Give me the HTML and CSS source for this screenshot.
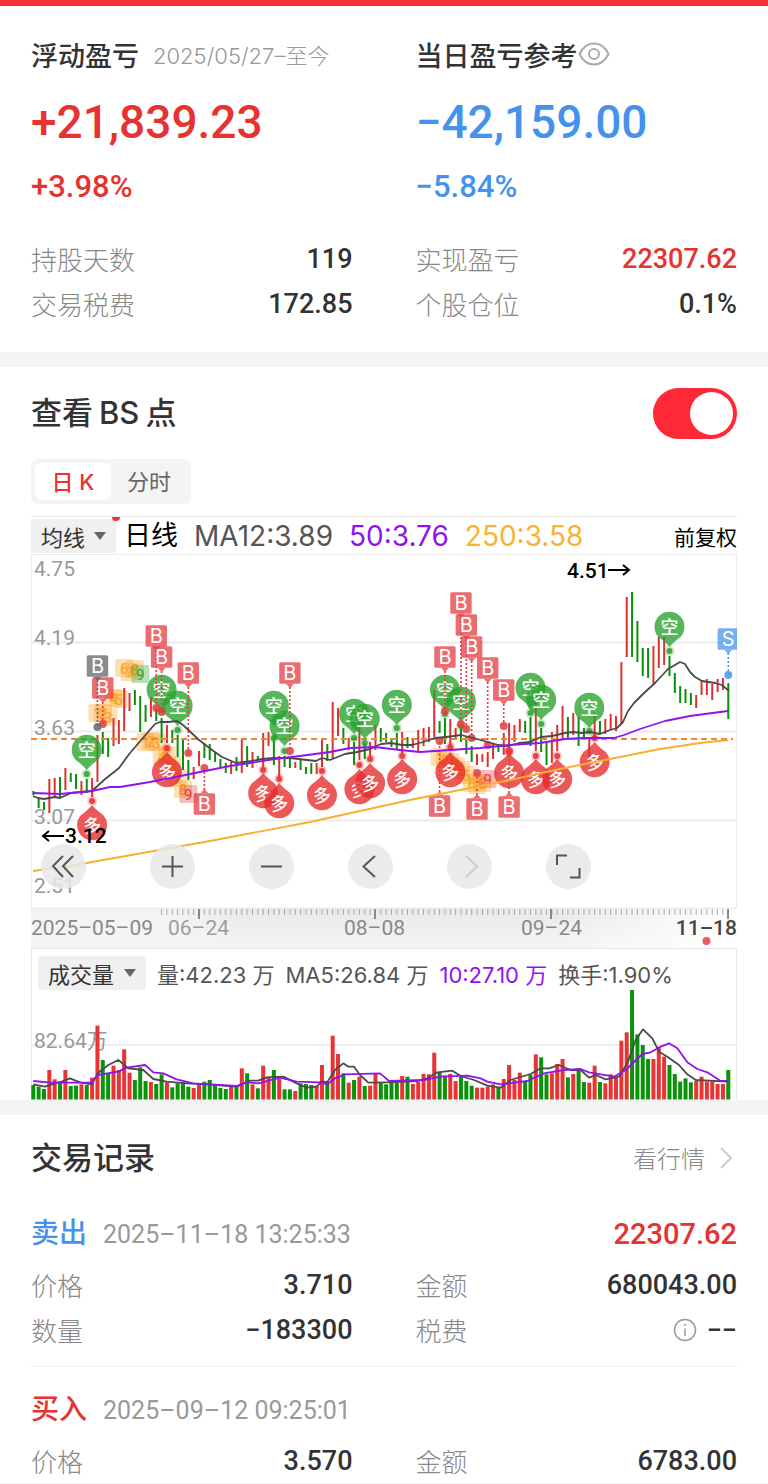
FILE: index.html
```html
<!DOCTYPE html>
<html lang="zh-CN">
<head>
<meta charset="utf-8">
<meta name="viewport" content="width=device-width, initial-scale=1">
<title>持仓盈亏</title>
<link rel="stylesheet" href="styles.css">
</head>
<body>
<main class="page">
  <section class="panel summary">
    <div class="summary-col">
      <h2 class="summary-title">浮动盈亏 <span class="period">2025/05/27–至今</span></h2>
      <p class="amount up">+21,839.23</p>
      <p class="percent up">+3.98%</p>
      <dl class="rows">
        <div class="row"><dt>持股天数</dt><dd>119</dd></div>
        <div class="row"><dt>交易税费</dt><dd>172.85</dd></div>
      </dl>
    </div>
    <div class="summary-col">
      <h2 class="summary-title tight">当日盈亏参考
        <button class="icon-button" type="button" aria-label="隐藏金额">
          <svg width="32" height="24" viewBox="0 0 32 24" fill="none" stroke="#aaa" stroke-width="2"><path d="M1.500 12C5 4.500 10 1.500 16 1.500S27 4.500 30.500 12C27 19.500 22 22.500 16 22.500S5 19.500 1.500 12Z"/><circle cx="16" cy="12" r="5"/></svg>
        </button>
      </h2>
      <p class="amount down">−42,159.00</p>
      <p class="percent down">−5.84%</p>
      <dl class="rows">
        <div class="row"><dt>实现盈亏</dt><dd class="up">22307.62</dd></div>
        <div class="row"><dt>个股仓位</dt><dd>0.1%</dd></div>
      </dl>
    </div>
  </section>

  <section class="panel chart-panel">
    <div class="chart-head">
      <label class="section-title" for="bs"><span>查看</span><span>BS</span><span>点</span></label>
      <input class="switch" id="bs" type="checkbox" role="switch" checked>
    </div>
    <div class="tabs">
      <button class="tab active" type="button">日 K</button>
      <button class="tab" type="button">分时</button>
    </div>

    <div class="ma-bar">
      <span class="picker picker-ma">
        <select aria-label="主图指标"><option>均线</option></select>
        <svg width="12" height="8" viewBox="0 0 12 8"><path d="M0 0H12L6 8Z" fill="#666"/></svg>
        <i class="new-dot"></i>
      </span>
      <span class="ma-name">日线</span>
      <span class="ma-value">MA12:3.89</span>
      <span class="ma-value violet">50:3.76</span>
      <span class="ma-value amber">250:3.58</span>
      <span class="adjust">前复权</span>
    </div>

    <div class="kline">
      <svg class="plot" viewBox="31 554 706 355" role="img" aria-label="日K线图">
        <g class="grid"><path d="M31 642.500H737M31 731.500H737M31 820.500H737"/><rect x="31" y="554" width="706" height="354.500"/></g>
        <g class="scale">
          <text x="34" y="576">4.75</text><text x="34" y="645">4.19</text><text x="34" y="735">3.63</text><text x="34" y="824">3.07</text><text x="34" y="893">2.51</text>
        </g>
        <g id="counts"></g>
        <g id="candles"></g>
        <path d="M31 739H733" stroke="#f5842c" stroke-width="2" stroke-dasharray="6 4"/>
        <g id="markers"></g>
        <g id="averages"></g>
        <g class="extreme">
          <text x="567" y="578">4.51</text><path d="M608 570H629M623 565L629 570L623 575"/>
          <text x="65" y="843">3.12</text><path d="M64 836H43M49 831L43 836L49 841"/>
        </g>
      </svg>
      <div class="tools">
        <button type="button" aria-label="最早"><svg viewBox="0 0 45 45"><path d="M32 12L22 22L32 33M22 12L12 22L22 33"/></svg></button>
        <button type="button" aria-label="放大"><svg viewBox="0 0 45 45"><path d="M12 22.500H33M22.500 12V33"/></svg></button>
        <button type="button" aria-label="缩小"><svg viewBox="0 0 45 45"><path d="M12 22.500H33"/></svg></button>
        <button type="button" aria-label="向前"><svg viewBox="0 0 45 45"><path d="M27 12L15.500 22.500L27 33"/></svg></button>
        <button type="button" aria-label="向后" disabled><svg viewBox="0 0 45 45"><path d="M19 12L30 22.500L19 33"/></svg></button>
        <button type="button" aria-label="全屏"><svg viewBox="0 0 45 45"><path d="M11 21V11.500H21M24 33.500H33.500V24"/></svg></button>
      </div>
    </div>

    <svg class="plot axis" viewBox="31 909 706 39" role="img" aria-label="日期">
      <defs><linearGradient id="shade" x1="0" x2="0" y1="0" y2="1"><stop offset="0" stop-color="#e9e9e9"/><stop offset="1" stop-color="#f5f5f5"/></linearGradient>
      <linearGradient id="fade"><stop offset="0" stop-color="#f4f4f4"/><stop offset=".18" stop-color="#f4f4f4"/><stop offset=".3" stop-color="#f4f4f4" stop-opacity="0"/><stop offset=".75" stop-color="#fff" stop-opacity="0"/><stop offset="1" stop-color="#fff"/></linearGradient></defs>
      <rect x="31" y="909" width="706" height="39" fill="url(#shade)"/>
      <rect x="31" y="909" width="706" height="39" fill="url(#fade)"/>
      <path id="ticks" stroke="#aaa" stroke-width="1"/>
      <path d="M199 909V919M375 909V919M551 909V919M728 909V919" stroke="#888" stroke-width="2"/>
      <g class="dates"><text x="31" y="935">2025–05–09</text><text x="168" y="935" opacity=".8">06–24</text><text x="344" y="935">08–08</text><text x="521" y="935">09–24</text><text class="today" x="737" y="935" text-anchor="end">11–18</text></g>
      <circle cx="706.500" cy="941" r="4" fill="#ee5c5c"/>
    </svg>

    <div class="volume">
      <div class="volume-bar">
        <span class="picker picker-vol">
          <select aria-label="副图指标"><option>成交量</option></select>
          <svg width="12" height="8" viewBox="0 0 12 8"><path d="M0 0H12L6 8Z" fill="#666"/></svg>
        </span>
        <span>量:42.23 万</span><span>MA5:26.84 万</span><span class="violet">10:27.10 万</span><span>换手:1.90%</span>
      </div>
      <svg class="plot" viewBox="31 990 706 110" role="img" aria-label="成交量图">
        <path d="M31 1045H737" stroke="#ececec" stroke-width="2"/>
        <text class="volume-scale" x="34" y="1048">82.64万</text>
        <g id="bars"></g>
        <g id="volume-averages"></g>
      </svg>
    </div>
  </section>

  <section class="panel records">
    <div class="records-head">
      <h2 class="section-title">交易记录</h2>
      <a class="more" href="#quote">看行情 <svg width="14" height="24" viewBox="0 0 14 24" fill="none" stroke="#ccc" stroke-width="2"><path d="M2 2L12 12L2 22"/></svg></a>
    </div>
    <article class="record">
      <div class="record-head"><h3 class="down">卖出</h3><time>2025–11–18 13:25:33</time><strong class="up">22307.62</strong></div>
      <dl class="record-grid">
        <div class="row"><dt>价格</dt><dd>3.710</dd></div>
        <div class="row"><dt>金额</dt><dd>680043.00</dd></div>
        <div class="row"><dt>数量</dt><dd>−183300</dd></div>
        <div class="row"><dt>税费</dt><dd class="with-icon"><svg width="24" height="24" viewBox="0 0 24 24" fill="none" stroke="#999" stroke-width="1.500"><circle cx="12" cy="12" r="10.500"/><path d="M12 10.500V18M12 6V8"/></svg>−−</dd></div>
      </dl>
    </article>
    <article class="record">
      <div class="record-head"><h3 class="up">买入</h3><time>2025–09–12 09:25:01</time></div>
      <dl class="record-grid">
        <div class="row"><dt>价格</dt><dd>3.570</dd></div>
        <div class="row"><dt>金额</dt><dd>6783.00</dd></div>
      </dl>
    </article>
  </section>
</main>
<script src="chart.js"></script>
</body>
</html>
```
FILE: styles.css
```css
* { box-sizing: border-box; }
body, h2, h3, p, dl, dd { margin: 0; }
body { background: #f4f4f4; color: #333; font-family: Roboto, "Noto Sans CJK SC", sans-serif; }
button, select, input { font: inherit; color: inherit; margin: 0; padding: 0; border: 0; background: none; }
.page { display: flex; flex-direction: column; gap: 15px; border-top: 6px solid #f23035; }
.panel { background: #fff; padding: 0 31px; }
.up { color: #e63230; }
.down { color: #4492ec; }
.violet { color: #9012ee; }
.amber { color: #f9b232; }

.summary { display: grid; grid-template-columns: 1fr 1fr; gap: 63px; padding-top: 24px; padding-bottom: 26px; }
.summary-title { display: flex; align-items: center; gap: 14px; height: 48px; margin-bottom: 2px; font-size: 27px; font-weight: 500; white-space: nowrap; }
.summary-title.tight { gap: 0; }
.period { font-family: Inter, "Noto Sans CJK SC", sans-serif; font-size: 22px; font-weight: 300; color: #999; }
.icon-button { display: flex; }
.amount { font-size: 46px; line-height: 84px; font-weight: 500; }
.percent { font-size: 31px; line-height: 46px; font-weight: 500; }
.rows { margin-top: 26px; }
.row { display: flex; align-items: center; justify-content: space-between; height: 45px; font-size: 27px; }
.row dt { color: #888; font-family: "Noto Sans CJK SC", sans-serif; font-size: 26px; line-height: 34px; font-weight: 300; }
.row dd { font-size: 27px; font-weight: 500; }
.with-icon { display: flex; align-items: center; gap: 10px; }

.chart-panel { padding-top: 20px; }
.chart-head, .records-head { display: flex; align-items: center; justify-content: space-between; }
.chart-head { height: 52px; }
.section-title { display: flex; gap: 6px; font-family: Inter, "Noto Sans CJK SC", sans-serif; font-size: 31px; line-height: 40px; font-weight: 500; }
.switch { appearance: none; width: 84px; height: 51px; border-radius: 26px; background: #aaa; display: flex; padding: 4px; }
.switch::before { content: ""; width: 43px; height: 43px; border-radius: 50%; background: #fff; }
.switch:checked { background: #ff2836; justify-content: flex-end; }
.tabs { display: inline-flex; margin-top: 20px; padding: 4px; height: 45px; border-radius: 7px; background: #f4f4f4; vertical-align: top; }
.tab { width: 76px; border-radius: 6px; font-family: Inter, "Noto Sans CJK SC", sans-serif; font-size: 22px; line-height: 30px; color: #666; }
.tab.active { background: #fff; color: #e63230; font-weight: 500; }

.ma-bar { display: flex; align-items: center; height: 38px; margin-top: 12px; border-top: 1px solid #e8e8e8; white-space: nowrap; }
.picker { display: flex; align-items: center; justify-content: space-between; height: 34px; padding: 0 10px; border-radius: 3px; background: #f0f0f0; color: #333; font-size: 22px; }
.picker select { appearance: none; font-family: "Noto Sans CJK SC", sans-serif; line-height: 30px; }
.picker-ma { position: relative; width: 85px; }
.new-dot { position: absolute; top: -2px; right: -4px; width: 8px; height: 4px; border-radius: 0 0 4px 4px; background: #ff2836; }
.ma-name { margin-left: 8px; font-size: 27px; line-height: 34px; color: #000; }
.ma-value { margin-left: 16px; font-family: Inter, sans-serif; font-size: 28px; line-height: 34px; color: #555; }
.ma-value.violet { color: #9012ee; }
.ma-value.amber { color: #f9b232; }
.adjust { margin-left: auto; font-size: 21px; color: #000; }

.kline { position: relative; }
.plot { display: block; width: 100%; height: auto; }
.grid { fill: none; stroke: #ececec; stroke-width: 2; }
.scale { font-size: 21px; fill: #999; }
.extreme { font-size: 21px; font-weight: 500; fill: #000; }
.extreme path { fill: none; stroke: #000; stroke-width: 2; }
.count { font-size: 15px; text-anchor: middle; }
.flag { font-family: Inter, sans-serif; font-size: 20px; fill: #fff; text-anchor: middle; }
.pin { font-family: "Noto Sans CJK SC", sans-serif; font-size: 18px; font-weight: 500; fill: #fff; text-anchor: middle; }
.tools { position: absolute; left: 10px; bottom: 20px; display: flex; gap: 54px; }
.tools button { width: 45px; height: 45px; border-radius: 50%; background: rgb(232 232 232 / 85%); }
.tools button:first-child { margin-right: 10px; }
.tools svg { display: block; fill: none; stroke: #555; stroke-width: 2; }
.tools button:disabled svg { stroke: #ccc; }
.dates { font-size: 21px; fill: #888; }
.today { font-weight: 500; fill: #444; }

.volume { box-shadow: inset 1px 1px #e8e8e8, inset -1px 0 #e8e8e8; }
.volume-bar { display: flex; align-items: center; gap: 11px; height: 42px; padding-top: 8px; padding-left: 7px; font-family: Inter, "Noto Sans CJK SC", sans-serif; font-size: 22px; color: #555; white-space: nowrap; }
.volume-bar .violet { color: #9012ee; }
.picker-vol { width: 108px; }
.volume-scale { font-size: 21px; fill: #999; }

.records { padding-top: 20px; }
.records-head { height: 45px; margin-bottom: 11px; }
.more { display: flex; align-items: center; gap: 14px; margin-right: 4px; color: #888; font-size: 24px; line-height: 30px; font-weight: 300; font-family: "Noto Sans CJK SC", sans-serif; text-decoration: none; }
.record { padding: 18px 0 14px; border-bottom: 1px solid #f0f0f0; }
.record:last-child { padding-bottom: 0; border: 0; }
.record-head { display: flex; align-items: center; height: 50px; margin-bottom: 3px; }
.record-head h3 { font-size: 28px; line-height: 36px; font-weight: 500; }
.record-head time { margin-left: 16px; font-size: 25px; color: #999; }
.record-head strong { margin-left: auto; font-size: 29px; font-weight: 500; }
.record-grid { display: grid; grid-template-columns: 1fr 1fr; column-gap: 63px; }
```
FILE: chart.js
```js
const NS = 'http://www.w3.org/2000/svg';
const RED = '#dc3232', GREEN = '#0a8f0a';
const step = 5.346;
const xAt = i => 33.3 + step * i;

function add(parent, tag, attrs, text) {
  const el = document.createElementNS(NS, tag);
  for (const key in attrs) el.setAttribute(key, attrs[key]);
  if (text) el.textContent = text;
  parent.appendChild(el);
  return el;
}
const layer = id => document.getElementById(id);

// Daily ranges: direction, high, low.
const days = `g791-795 g798-808 g802-810 r779-813 r778-797 g777-797 r768-790 g773-782 g774-789 r781-795
g779-793 r778-797 r735-782 g732-754 g738-757 r718-746 r720-744 r688-731 r693-711 g690-705
g696-732 g705-722 r697-717 g708-721 g718-743 r725-743 g730-743 g735-757 g738-770 g760-780
r767-779 r751-766 g743-758 g744-760 g752-762 g759-768 g763-773 r762-774 g757-771 r738-773
g746-767 r752-768 g756-762 r733-767 r732-746 g735-765 r756-777 g756-767 g757-768 r762-768
g759-770 g767-774 g763-774 r763-774 r738-767 g744-761 r702-759 r708-736 g728-744 r738-750
g742-765 r728-760 g743-759 r742-757 r725-750 g728-742 g733-742 g738-747 g733-750 r732-753
g737-748 r740-748 r730-751 r728-746 r727-742 r690-737 g721-733 g718-744 r719-745 r728-738
g727-742 g737-754 g746-762 r754-765 r754-762 r752-767 r743-759 g745-752 r733-755 r723-753
r725-742 r719-732 g721-733 g717-746 r697-751 g728-752 g743-765 r732-763 r725-751 r706-738
g717-738 r713-735 g717-746 g728-738 r737-757 r713-737 g721-733 r719-734 r714-730 r716-731
r662-724 r597-657 g592-657 g621-662 g648-676 g648-678 r646-684 r637-668 r637-665 g656-676
g673-693 g686-703 g689-703 g693-705 r695-708 r681-695 r679-695 r684-700 r679-692 r678-690
g683-719`.split(/\s+/);
days.forEach((d, i) => {
  const [hi, lo] = d.slice(1).split('-').map(Number);
  add(layer('candles'), 'rect', { x: xAt(i) - 1, y: hi, width: 2, height: lo - hi, fill: d[0] === 'r' ? RED : GREEN });
});

function line(parent, points, color) {
  add(parent, 'polyline', { points, fill: 'none', stroke: color, 'stroke-width': 1.8, 'stroke-linejoin': 'round' });
}
const averages = layer('averages');
line(averages, '33,871 70,866 120,857 210,841 310,822 410,800 510,780 560,769 610,759 660,749 700,743 728,740', '#f6b02d');
line(averages, '33,796 38,798 44,799 55,797 60,798 71,793 92,791 104,780 119,768 130,753 155,724 160,722 168,722 177,721 183,725 199,740 212,750 222,757 236,763 252,761 262,759 274,758 290,758 307,760 316,761 322,758 330,760 345,754 357,752 370,749 381,744 391,743 402,745 412,745 423,742 435,738 446,737 461,735 477,739 488,742 498,745 508,746 519,743 530,742 541,737 552,736 565,733 573,732 582,733 590,732 600,734 610,730 617,728 623,722 628,711 634,703 643,694 655,683 668,669 675,665 680,662 685,664 690,672 695,677 702,681 715,683 722,685 729,691', '#4a4a4a');
line(averages, '33,793 60,794 92,791 110,787 120,787 150,782 171,778 190,774 210,770 230,766 250,763 275,759 300,756 330,752 350,748 375,747 400,750 420,752 450,750 480,748 510,745 540,743 565,739 583,738 614,738 624,735 640,729 665,721 690,716 705,714 720,712 728,711', '#9012ee');

// Sequence counts: day, centre, digit, colour.
const counts = layer('counts');
[[12, 713, 1], [13, 713, 2], [14, 717, 3], [15, 698, 4], [16, 699, 5], [17, 668, 6], [18, 672, 7], [19, 669, 8], [20, 674, 9, '#2ca52c'],
 [21, 742, 1], [22, 741, 2], [23, 742, 3], [24, 757, 4], [25, 755, 5], [26, 765, 6], [27, 778, 7], [28, 789, 8], [29, 794, 9, '#e83c3c'],
 [76, 757, 1], [77, 760, 2], [78, 762, 3], [79, 766, 4], [80, 770, 5], [81, 775, 5], [82, 783, 6], [83, 785, 7], [84, 783, 8], [85, 779, 9, '#e83c3c']
].forEach(([i, y, n, color = '#fba024']) => {
  const x = xAt(i);
  add(counts, 'rect', { x: x - 9, y: y - 9, width: 18, height: 18, rx: 2, fill: color, opacity: .34 });
  add(counts, 'text', { class: 'count', x, y: y + 6, fill: color }, n);
});

const markers = layer('markers');
function dot(x, y, color, halo) {
  if (halo) add(markers, 'circle', { cx: x, cy: y, r: 5, fill: color, opacity: .25 });
  add(markers, 'circle', { cx: x, cy: y, r: halo ? 3 : 4, fill: color, opacity: .85 });
}
// Trades: day, flag centre, trade point.
function flag(i, y, end, letter, color) {
  const x = xAt(i), dir = end > y ? 1 : -1;
  add(markers, 'path', { d: `M${x} ${y + dir * 14}V${end}`, stroke: color, 'stroke-width': 1.6, 'stroke-dasharray': '2 2' });
  dot(x, end, color);
  add(markers, 'rect', { x: x - 10.7, y: y - 10.7, width: 21.4, height: 21.4, rx: 1.5, fill: color, opacity: .75 });
  add(markers, 'path', { d: `M${x - 4} ${y + dir * 10.7}H${x + 4}L${x} ${y + dir * 15}Z`, fill: color, opacity: .75 });
  add(markers, 'text', { class: 'flag', x, y: y + 7 }, letter);
}
// Signals: day, pin centre, signal point.
function pin(i, y, end, label, color) {
  const x = xAt(i), dir = end > y ? 1 : -1;
  dot(x, end, color, true);
  add(markers, 'path', {
    d: `M${x - 11} ${y + dir * 10}Q${x - 3} ${y + dir * 16} ${x} ${y + dir * 20}Q${x + 3} ${y + dir * 16} ${x + 11} ${y + dir * 10}A15 15 0 1 ${dir > 0 ? 0 : 1} ${x - 11} ${y + dir * 10}Z`,
    fill: color, opacity: .78
  });
  const t = add(markers, 'text', { class: 'pin', x, y: y + 7 }, label);
  if (dir < 0) t.setAttribute('transform', `rotate(-8 ${x} ${y})`);
}
[[10, 750, 774], [24, 690, 710], [27, 706, 730], [45, 706, 738], [47, 726, 751], [60, 714, 738], [62, 719, 743], [68, 705, 728],
 [77, 690, 714], [80, 702, 726], [93, 688, 713], [95, 700, 724], [104, 708, 731], [119, 627, 651]
].forEach(p => pin(...p, '空', '#28a22c'));
[[11, 825, 801], [25, 772, 748], [43, 793, 770], [46, 803, 779], [54, 795, 771], [61, 789, 765], [63, 783, 759], [69, 779, 756],
 [78, 772, 747], [89, 773, 752], [94, 779, 756], [98, 779, 756], [105, 762, 738]
].forEach(p => pin(...p, '多', '#e62a2a'));
[[13, 688, 724], [23, 636, 708], [24, 657, 712], [29, 673, 753], [32, 804, 768], [48, 673, 751], [77, 657, 711], [80, 603, 724],
 [81, 625, 729], [82, 647, 738], [85, 668, 745], [88, 690, 726], [76, 806, 741], [83, 809, 773], [89, 807, 751]
].forEach(p => flag(...p, 'B', '#e43c40'));
flag(12, 666, 727, 'B', '#666');
flag(130, 639, 675, 'S', '#4a94ee');

let ticks = '';
for (let i = 24; i < 131; i++) ticks += `M${xAt(i)} 909V915`;
layer('ticks').setAttribute('d', ticks);

// Volume bar tops, in thirds of a unit below y = 890.
const tops = [585, 590, 597, 540, 568, 575, 540, 588, 587, 583, 585, 563, 407, 510, 550, 527, 540, 478, 548, 570,
  532, 573, 576, 582, 553, 577, 592, 580, 578, 590, 594, 585, 575, 570, 585, 594, 597, 590, 590, 535,
  550, 583, 595, 527, 562, 540, 567, 598, 598, 603, 580, 582, 585, 587, 525, 575, 437, 492, 550, 578,
  570, 560, 588, 587, 550, 577, 583, 577, 577, 558, 560, 582, 575, 552, 553, 488, 547, 557, 552, 573,
  560, 573, 587, 593, 593, 590, 583, 593, 567, 525, 570, 548, 573, 555, 493, 502, 553, 550, 522, 507,
  562, 552, 540, 576, 578, 527, 576, 580, 553, 563, 452, 427, 300, 433, 465, 507, 507, 470, 500, 525,
  552, 575, 565, 577, 573, 560, 575, 575, 582, 582, 540];
tops.forEach((t, i) => {
  const y = 890 + t / 3;
  add(layer('bars'), 'rect', { x: xAt(i) - 2, y, width: 4, height: 1099.5 - y, fill: days[i][0] === 'r' ? '#e83434' : '#0a930a' });
});
const series = (x0, list) => list.map(([x, y]) => `${x0 + x / 3},${890 + y / 3}`).join(' ');
const va = layer('volume-averages');
line(va, series(20, [[40, 583], [75, 590], [105, 580], [125, 575], [150, 565], [180, 577], [215, 583], [233, 550], [265, 525], [295, 510], [325, 535], [370, 540], [400, 567], [440, 575], [500, 580], [560, 583], [650, 590], [690, 572], [715, 572], [740, 562], [790, 560], [830, 580], [860, 593], [890, 590], [905, 575], [922, 576], [945, 540], [970, 520], [985, 530], [1002, 530], [1020, 555], [1045, 578], [1100, 577]]) + ' ' +
  series(384, [[10, 577], [100, 573], [130, 565], [160, 547], [205, 542], [230, 558], [270, 570], [310, 587], [350, 593], [380, 570], [440, 552], [470, 535], [495, 535], [525, 525], [560, 540], [590, 540], [615, 563], [635, 555], [665, 568], [705, 560], [730, 520], [755, 450], [777, 418], [805, 445], [825, 485], [850, 500], [885, 525], [910, 553], [935, 570], [1032, 575]]), '#4a4a4a');
line(va, series(20, [[40, 573], [90, 578], [215, 578], [233, 555], [295, 545], [320, 533], [375, 525], [400, 547], [430, 550], [470, 568], [520, 580], [650, 588], [680, 577], [715, 580], [780, 563], [830, 575], [900, 577], [922, 583], [945, 565], [975, 553], [1080, 550]]) + ' ' +
  series(384, [[0, 560], [15, 573], [120, 570], [170, 560], [250, 557], [290, 565], [310, 575], [350, 583], [430, 573], [480, 550], [540, 540], [590, 537], [615, 547], [690, 560], [725, 540], [775, 492], [800, 487], [830, 470], [855, 460], [880, 475], [910, 517], [940, 537], [970, 547], [1010, 573], [1032, 573]]), '#9012ee');
```
